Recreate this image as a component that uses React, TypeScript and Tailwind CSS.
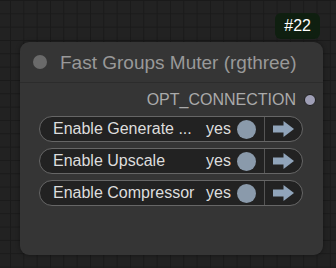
import React from "react";

const Arrow = () => (
  <svg width="21" height="16" viewBox="0 0 21 16" className="block">
    <path d="M0 4.5 H10.5 V0 L21 8 L10.5 16 V11.5 H0 Z" fill="#90a4ba" />
  </svg>
);

const rows = ["Enable Generate ...", "Enable Upscale", "Enable Compressor"];

export default function App() {
  return (
    <div
      className="w-[336px] h-[268px] overflow-hidden bg-[#222222] flex flex-col [background-image:linear-gradient(to_right,#1a1a1a_1px,transparent_1px),linear-gradient(to_bottom,#1a1a1a_1px,transparent_1px)] [background-size:13.333px_13.333px] [background-position:10px_0px]"
      style={{ fontFamily: '"Liberation Sans", Arial, sans-serif' }}
    >
      <div className="flex justify-end pt-[13px] pr-[16px]">
        <div className="h-[26px] px-[9px] flex items-center rounded-[6px] bg-[#0f1f10] text-white text-[16px] leading-none">
          #22
        </div>
      </div>
      <div className="mt-[3px] ml-[20px] w-[303px] h-[213px] rounded-[9px] bg-[#353535] flex flex-col shadow-[0_0_4px_rgba(0,0,0,0.4)]">
        <div className="h-[41px] flex items-center border-b border-[#2c2c2c] pl-[13px]">
          <div className="w-[14px] h-[14px] rounded-full bg-[#6a6a6a]" />
          <span className="ml-[13px] text-[19px] text-[#999999] leading-none">
            Fast Groups Muter (rgthree)
          </span>
        </div>
        <div className="mt-[7px] h-[20px] flex items-center justify-end pr-[7px]">
          <span className="text-[16px] text-[#aaaaaa] leading-none">OPT_CONNECTION</span>
          <div className="ml-[8px] w-[12px] h-[12px] rounded-full bg-[#9f9fb6] border border-[#1e1e1e]" />
        </div>
        <div className="mt-[6px] flex flex-col gap-[6px] pl-[19px]">
          {rows.map((r) => (
            <div
              key={r}
              className="w-[264px] h-[26px] rounded-full border border-[#666666] bg-[#222222] flex items-center"
            >
              <span className="pl-[13px] flex-1 text-[16px] text-[#dddddd] leading-none whitespace-nowrap">
                {r}
              </span>
              <span className="text-[16px] text-[#dddddd] leading-none">yes</span>
              <div className="ml-[6px] w-[19px] h-[19px] rounded-full bg-[#8a9aab]" />
              <div className="ml-[8px] w-px self-stretch bg-[#555555]" />
              <div className="ml-[8px]">
                <Arrow />
              </div>
              <div className="w-[8px]" />
            </div>
          ))}
        </div>
      </div>
    </div>
  );
}
